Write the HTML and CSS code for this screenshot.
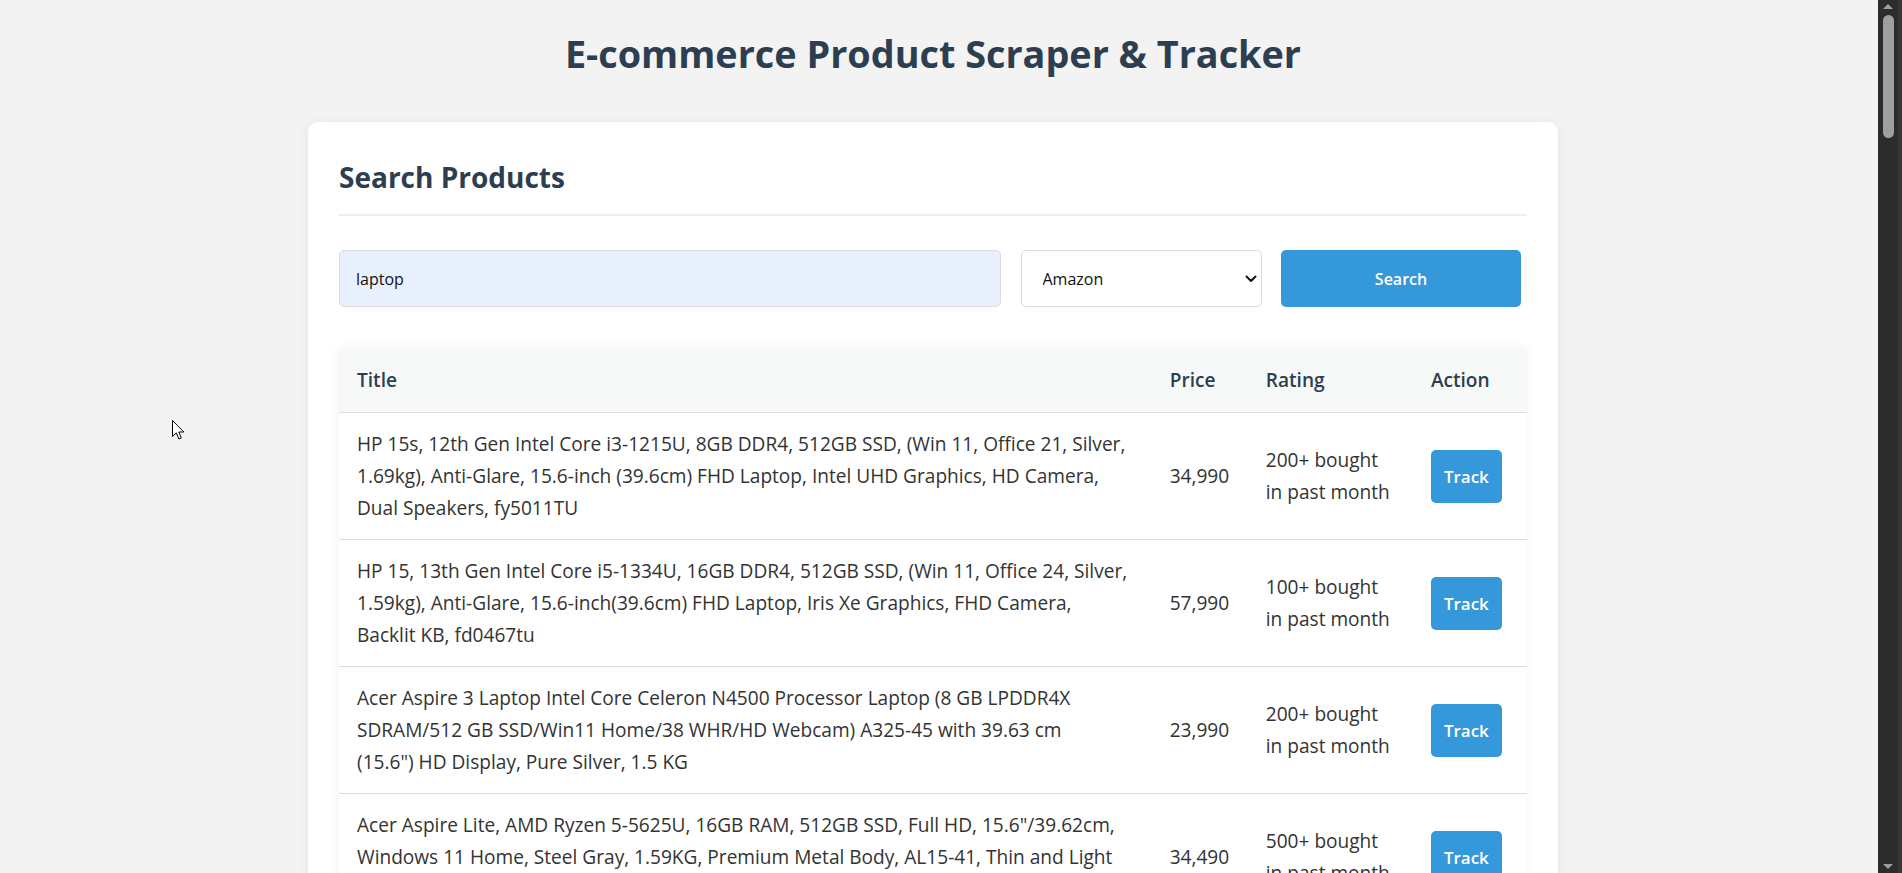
FILE: index.html
```html
<!DOCTYPE html>
<html lang="en">
<head>
<meta charset="utf-8">
<title>E-commerce Product Scraper &amp; Tracker</title>
<link rel="stylesheet" href="styles.css">
</head>
<body>
<div class="page">
  <h1 class="page-title">E-commerce Product Scraper &amp; Tracker</h1>
  <main class="card">
    <h2 class="section-title">Search Products</h2>
    <form class="search-row">
      <input class="search-input" type="text" value="laptop">
      <div class="select-wrap">
        <select class="site-select">
          <option>Amazon</option>
          <option>Flipkart</option>
        </select>
        <svg class="select-arrow" width="12" height="8" viewBox="0 0 12 8"><path d="M1.5 1.5 L6 6 L10.5 1.5" fill="none" stroke="#111" stroke-width="2" stroke-linecap="round" stroke-linejoin="round"/></svg>
      </div>
      <button class="btn btn-search" type="button">Search</button>
    </form>

    <table class="results">
      <colgroup>
        <col class="col-title">
        <col class="col-price">
        <col class="col-rating">
        <col class="col-action">
      </colgroup>
      <thead>
        <tr><th>Title</th><th>Price</th><th>Rating</th><th>Action</th></tr>
      </thead>
      <tbody>
        <tr>
          <td>HP 15s, 12th Gen Intel Core i3-1215U, 8GB DDR4, 512GB SSD, (Win 11, Office 21, Silver, 1.69kg), Anti-Glare, 15.6-inch (39.6cm) FHD Laptop, Intel UHD Graphics, HD Camera, Dual Speakers, fy5011TU</td>
          <td>34,990</td>
          <td>200+ bought in past month</td>
          <td><button class="btn btn-track" type="button">Track</button></td>
        </tr>
        <tr>
          <td>HP 15, 13th Gen Intel Core i5-1334U, 16GB DDR4, 512GB SSD, (Win 11, Office 24, Silver, 1.59kg), Anti-Glare, 15.6-inch(39.6cm) FHD Laptop, Iris Xe Graphics, FHD Camera, Backlit KB, fd0467tu</td>
          <td>57,990</td>
          <td>100+ bought in past month</td>
          <td><button class="btn btn-track" type="button">Track</button></td>
        </tr>
        <tr>
          <td>Acer Aspire 3 Laptop Intel Core Celeron N4500 Processor Laptop (8 GB LPDDR4X SDRAM/512 GB SSD/Win11 Home/38 WHR/HD Webcam) A325-45 with 39.63 cm<br>(15.6") HD Display, Pure Silver, 1.5 KG</td>
          <td>23,990</td>
          <td>200+ bought in past month</td>
          <td><button class="btn btn-track" type="button">Track</button></td>
        </tr>
        <tr>
          <td>Acer Aspire Lite, AMD Ryzen 5-5625U, 16GB RAM, 512GB SSD, Full HD, 15.6"/39.62cm, Windows 11 Home, Steel Gray, 1.59KG, Premium Metal Body, AL15-41, Thin and Light Laptop</td>
          <td>34,490</td>
          <td>500+ bought in past month</td>
          <td><button class="btn btn-track" type="button">Track</button></td>
        </tr>
        <tr>
          <td>Lenovo IdeaPad Slim 3 Intel Core i5-12450H 12th Gen 15.6" (39.62cm) FHD Laptop (16GB/512GB SSD/Win 11/Office 2021/Arctic Grey/1.6Kg)</td>
          <td>52,990</td>
          <td>1K+ bought in past month</td>
          <td><button class="btn btn-track" type="button">Track</button></td>
        </tr>
      </tbody>
    </table>
  </main>
</div>
<svg class="cursor" width="13" height="21" viewBox="0 0 13 21"><path d="M0.5 0.5 L0.5 16.5 L4.3 12.9 L6.9 19 L9.3 18 L6.8 12 L11.8 12 Z" fill="#fff" stroke="#000" stroke-width="1" stroke-linejoin="miter"/></svg>
<div class="fake-scrollbar" aria-hidden="true">
  <span class="sb-arrow sb-up"></span>
  <span class="sb-thumb"></span>
  <span class="sb-arrow sb-down"></span>
</div>
</body>
</html>
```

FILE: styles.css
```css
* { box-sizing: border-box; }

html, body {
  margin: 0;
  padding: 0;
}

body {
  background: #f3f3f3;
  font-family: "Open Sans", "Noto Sans", Arial, sans-serif;
  color: #333;
}

.page {
  padding: 30px 56px 40px 20px;
}

.page-title {
  margin: 0 0 44px;
  text-align: center;
  font-size: 37.8px;
  line-height: 48px;
  font-weight: 700;
  color: #2c3e50;
}

.card {
  max-width: 1250px;
  margin: 0 auto;
  background: #fff;
  border-radius: 10px;
  box-shadow: 0 2px 12px rgba(0, 0, 0, 0.07);
  padding: 38px 31px 31px;
}

.section-title {
  margin: 0 0 34px;
  padding-bottom: 20px;
  border-bottom: 2px solid #eee;
  font-size: 28px;
  line-height: 34px;
  font-weight: 700;
  color: #2c3e50;
}

.search-row {
  display: grid;
  grid-template-columns: 1fr 241px 240px;
  column-gap: 19.5px;
  margin: 0 6px 41px 0;
}

.search-input,
.site-select {
  height: 57px;
  border: 1px solid #ddd;
  border-radius: 5px;
  font-family: inherit;
  font-size: 16px;
  color: #111;
}

.search-input {
  background: #e8f0fe;
  padding: 0 16px;
}

.select-wrap {
  position: relative;
}

.site-select {
  width: 100%;
  appearance: none;
  -webkit-appearance: none;
  background: #fff;
  padding: 0 30px 0 21px;
}

.select-arrow {
  position: absolute;
  right: 5px;
  top: 25px;
  pointer-events: none;
}

.btn {
  border: none;
  border-radius: 5px;
  background: #3498db;
  color: #fff;
  font-family: inherit;
  font-weight: 700;
  cursor: pointer;
}

.btn-search {
  height: 57px;
  font-size: 16px;
  font-weight: 600;
}

.results {
  width: 100%;
  border-collapse: collapse;
  table-layout: fixed;
  background: #fff;
  box-shadow: 0 0 10px rgba(0, 0, 0, 0.06);
  font-size: 19.1px;
  line-height: 32px;
}

.col-title { width: 812px; }
.col-price { width: 96px; }
.col-rating { width: 165px; }
.col-action { width: 114px; }

.results th {
  background: #f7f9f9;
  color: #2c3e50;
  font-weight: 600;
  text-align: left;
  padding: 16px 18px;
  border-bottom: 1px solid #ddd;
}

.results td {
  padding: 15px 18px;
  border-bottom: 1px solid #ddd;
  vertical-align: middle;
  color: #333;
}

.btn-track {
  width: 71px;
  font-size: 17px;
  font-weight: 600;
  line-height: 23px;
  padding: 15px 0;
}

.cursor {
  position: absolute;
  left: 172px;
  top: 420px;
}

.fake-scrollbar {
  position: fixed;
  top: 0;
  right: 0;
  width: 24px;
  height: 100vh;
  background: #2c2c2c;
  border-right: 4px solid #383838;
  display: flex;
  flex-direction: column;
  align-items: center;
  padding-top: 4px;
}

.sb-arrow {
  width: 0;
  height: 0;
  border-left: 5px solid transparent;
  border-right: 5px solid transparent;
}

.sb-up {
  border-bottom: 5px solid #9e9e9e;
}

.sb-down {
  margin-top: auto;
  margin-bottom: 4px;
  border-top: 5px solid #9e9e9e;
}

.sb-thumb {
  margin-top: 6px;
  width: 11px;
  height: 123px;
  border-radius: 6px;
  background: #9f9f9f;
}
```
